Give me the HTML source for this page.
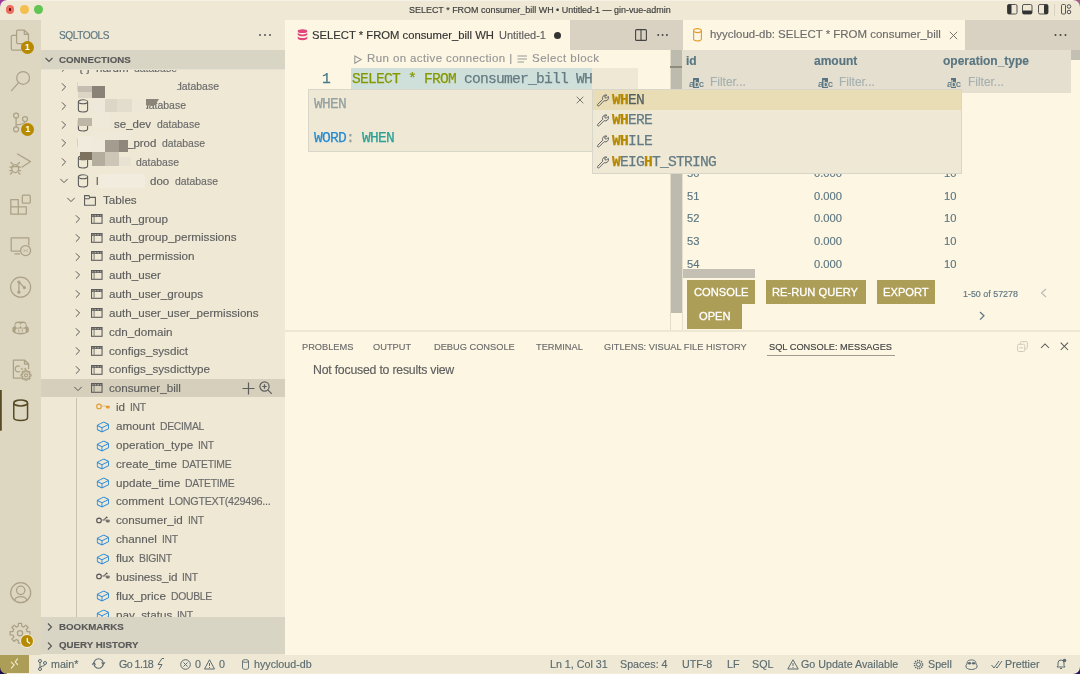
<!DOCTYPE html><html><head><meta charset="utf-8"><style>
*{margin:0;padding:0;box-sizing:border-box}
html,body{width:1080px;height:674px;overflow:hidden;background:#EEE8D5;font-family:'Liberation Sans', sans-serif;}
.a{position:absolute}
.t{position:absolute;white-space:nowrap;line-height:1;-webkit-text-stroke:0.15px currentColor;will-change:transform}
svg{position:absolute;overflow:visible}
</style></head><body>
<div class="a" style="left:0px;top:0px;width:1080px;height:20px;background:#EEE8D5;"></div>
<div class="a" style="left:0px;top:0px;width:1080px;height:1.2px;background:#F5F1E6;"></div>
<div class="a" style="left:5.549999999999999px;top:5.35px;width:8.8px;height:8.8px;border-radius:50%;background:#EE6B60;"></div>
<div class="a" style="left:19.9px;top:5.35px;width:8.8px;height:8.8px;border-radius:50%;background:#F4BF4F;"></div>
<div class="a" style="left:34.300000000000004px;top:5.35px;width:8.8px;height:8.8px;border-radius:50%;background:#61C453;"></div>
<div class="a" style="left:8.6px;top:8.4px;width:2.7px;height:2.7px;border-radius:50%;background:#5C0F0A;"></div>
<div class="t" style="left:409px;top:5.52px;height:8.96px;line-height:8.96px;font-size:8.96px;color:#3B3B3B;font-weight:400;font-family:'Liberation Sans', sans-serif;">SELECT * FROM consumer_bill WH • Untitled-1 — gin-vue-admin</div>
<svg style="left:1006.5px;top:4.1px" width="11" height="11" viewBox="0 0 11 11"><rect x="0.5" y="0.5" width="9.5" height="9.5" rx="1.5" fill="none" stroke="#555" stroke-width="1"/><rect x="0.5" y="0.5" width="4" height="9.5" rx="1" fill="#333"/></svg>
<svg style="left:1022px;top:4.1px" width="11" height="11" viewBox="0 0 11 11"><rect x="0.5" y="0.5" width="9.5" height="9.5" rx="1.5" fill="none" stroke="#555" stroke-width="1"/><rect x="0.5" y="6.5" width="9.5" height="3.5" rx="1" fill="#333"/></svg>
<svg style="left:1038px;top:4.1px" width="11" height="11" viewBox="0 0 11 11"><rect x="0.5" y="0.5" width="9.5" height="9.5" rx="1.5" fill="none" stroke="#555" stroke-width="1"/><rect x="6" y="0.5" width="4" height="9.5" rx="1" fill="#333"/></svg>
<div class="a" style="left:1053.5px;top:4px;width:1px;height:12px;background:#D8D2C0;"></div>
<svg style="left:1060.5px;top:4.1px" width="11" height="11" viewBox="0 0 11 11"><rect x="0.5" y="0.5" width="4" height="9.5" rx="1" fill="none" stroke="#555"/><circle cx="8" cy="2.5" r="1.8" fill="none" stroke="#555"/><circle cx="8" cy="8" r="1.8" fill="none" stroke="#555"/></svg>
<div class="a" style="left:0px;top:20px;width:41px;height:635px;background:#DDD6C1;"></div>
<svg style="left:0;top:0" width="41" height="674" viewBox="0 0 41 674"><path d="M21.9 43.7 H17.8 Q16.6 43.7 16.6 42.5 V31.3 Q16.6 30.1 17.8 30.1 H24.3 L28.5 34.3 V42.5 Q28.5 43.7 27.3 43.7 H21.9 M24.3 30.1 V34.3 H28.5" stroke-width="1.25" fill="none" stroke="#ACA185" stroke-linejoin="round" stroke-linecap="round"/><path d="M16.6 35.4 H12.5 Q11.3 35.4 11.3 36.6 V49 Q11.3 50.2 12.5 50.2 H20.7 Q21.9 50.2 21.9 49 V43.7" stroke-width="1.25" fill="none" stroke="#ACA185" stroke-linejoin="round" stroke-linecap="round"/><circle cx="23.1" cy="77.9" r="6.4" stroke-width="1.25" fill="none" stroke="#ACA185" stroke-linejoin="round" stroke-linecap="round"/><path d="M18.6 82.6 L11.5 90.6" stroke-width="1.25" fill="none" stroke="#ACA185" stroke-linejoin="round" stroke-linecap="round" stroke-width="1.4"/><circle cx="16.1" cy="115.6" r="2.5" stroke-width="1.25" fill="none" stroke="#ACA185" stroke-linejoin="round" stroke-linecap="round"/><circle cx="25" cy="119" r="2.5" stroke-width="1.25" fill="none" stroke="#ACA185" stroke-linejoin="round" stroke-linecap="round"/><circle cx="16.1" cy="129.3" r="2.5" stroke-width="1.25" fill="none" stroke="#ACA185" stroke-linejoin="round" stroke-linecap="round"/><path d="M16.1 118.1 V126.8 M25 121.5 Q24.5 124.6 16.1 124.8" stroke-width="1.25" fill="none" stroke="#ACA185" stroke-linejoin="round" stroke-linecap="round"/><path d="M17.6 154 L30.5 161.6 L22.2 167" stroke-width="1.25" fill="none" stroke="#ACA185" stroke-linejoin="round" stroke-linecap="round"/><ellipse cx="15.2" cy="168.6" rx="3.4" ry="4" stroke-width="1.25" fill="none" stroke="#ACA185" stroke-linejoin="round" stroke-linecap="round"/><path d="M11.8 167 H9.8 M11.8 170.5 H9.8 M18.6 167 H20.6 M18.6 170.5 H20.6 M12.5 164 L11 162.5 M17.9 164 L19.4 162.5 M12 172.5 L10.5 174 M18.4 172.5 L19.9 174 M11.8 166.5 H18.6" stroke-width="1.25" fill="none" stroke="#ACA185" stroke-linejoin="round" stroke-linecap="round" stroke-width="1.1"/><path d="M10.8 199.5 H18.3 V214 H10.8 Z M10.8 206.8 H26.3 V214 H18.3" stroke-width="1.25" fill="none" stroke="#ACA185" stroke-linejoin="round" stroke-linecap="round"/><rect x="22.3" y="195.2" width="8" height="8" rx="1.3" stroke-width="1.25" fill="none" stroke="#ACA185" stroke-linejoin="round" stroke-linecap="round"/><path d="M20 251 H11.2 V237.9 H28.8 V245" stroke-width="1.25" fill="none" stroke="#ACA185" stroke-linejoin="round" stroke-linecap="round"/><path d="M15 253.9 H19.5" stroke-width="1.25" fill="none" stroke="#ACA185" stroke-linejoin="round" stroke-linecap="round"/><circle cx="25.6" cy="250.6" r="5" stroke-width="1.25" fill="none" stroke="#ACA185" stroke-linejoin="round" stroke-linecap="round"/><path d="M23.6 249.2 L24.9 250.6 L23.6 252 M27.6 249.2 L26.3 250.6 L27.6 252" fill="none" stroke="#ACA185" stroke-width="0.9"/><circle cx="20.6" cy="287.2" r="10" stroke-width="1.25" fill="none" stroke="#ACA185" stroke-linejoin="round" stroke-linecap="round"/><path d="M18.9 282 V292.2 M18.9 282 L24.4 287.6" stroke-width="1.25" fill="none" stroke="#ACA185" stroke-linejoin="round" stroke-linecap="round"/><circle cx="18.9" cy="282" r="1.6" fill="#ACA185"/><circle cx="18.9" cy="292.2" r="1.6" fill="#ACA185"/><circle cx="24.4" cy="287.6" r="1.6" fill="#ACA185"/><path d="M14.5 326 C14.3 321.5 17 321.5 20.6 321.5 C24.2 321.5 26.9 321.5 26.7 326 L28.8 327.8 V331.5 C26.5 333.8 23.5 334.5 20.6 334.5 C17.7 334.5 14.7 333.8 12.4 331.5 V327.8 Z" fill="#ACA185"/><ellipse cx="18" cy="325.4" rx="2.6" ry="2.3" fill="#DDD6C1"/><ellipse cx="23.2" cy="325.4" rx="2.6" ry="2.3" fill="#DDD6C1"/><rect x="15.5" y="328.5" width="10.2" height="4.2" rx="1.5" fill="#DDD6C1"/><path d="M18.8 329.6 V331.4 M22.4 329.6 V331.4" stroke="#ACA185" stroke-width="1.1"/><path d="M21 378 H13.4 V360 H24.5 L28.6 364 V368.5 M24.5 360 V364 H28.6" stroke-width="1.25" fill="none" stroke="#ACA185" stroke-linejoin="round" stroke-linecap="round"/><path d="M19.5 366.2 A3 3 0 1 0 19.5 371.6" stroke-width="1.25" fill="none" stroke="#ACA185" stroke-linejoin="round" stroke-linecap="round" stroke-width="1.1"/><path d="M20.7 368.9 H23.1 M21.9 367.7 V370.1 M24 368.9 H26.4 M25.2 367.7 V370.1" fill="none" stroke="#ACA185" stroke-width="0.8"/><path d="M29.49 374.43 L30.93 374.48 L30.93 376.12 L29.49 376.17 L29.08 377.16 L30.07 378.21 L28.91 379.37 L27.86 378.38 L26.87 378.79 L26.82 380.23 L25.18 380.23 L25.13 378.79 L24.14 378.38 L23.09 379.37 L21.93 378.21 L22.92 377.16 L22.51 376.17 L21.07 376.12 L21.07 374.48 L22.51 374.43 L22.92 373.44 L21.93 372.39 L23.09 371.23 L24.14 372.22 L25.13 371.81 L25.18 370.37 L26.82 370.37 L26.87 371.81 L27.86 372.22 L28.91 371.23 L30.07 372.39 L29.08 373.44 Z" fill="#DDD6C1" stroke-width="1.25" fill="none" stroke="#ACA185" stroke-linejoin="round" stroke-linecap="round" stroke-width="1.1"/><circle cx="26" cy="375.3" r="1.5" stroke-width="1.25" fill="none" stroke="#ACA185" stroke-linejoin="round" stroke-linecap="round" stroke-width="1"/><rect x="0" y="390" width="1.8" height="40.7" fill="#584C27"/><ellipse cx="20.65" cy="403" rx="6.9" ry="2.9" fill="none" stroke="#584C27" stroke-width="1.5"/><path d="M13.75 403 V417.6 C13.75 421.6 27.55 421.6 27.55 417.6 V403" fill="none" stroke="#584C27" stroke-width="1.5"/><circle cx="20.7" cy="592.7" r="10" stroke-width="1.25" fill="none" stroke="#ACA185" stroke-linejoin="round" stroke-linecap="round"/><circle cx="20.7" cy="590.3" r="4.2" stroke-width="1.25" fill="none" stroke="#ACA185" stroke-linejoin="round" stroke-linecap="round"/><path d="M14.5 600.3 C16 595.5 25.4 595.5 26.9 600.3" stroke-width="1.25" fill="none" stroke="#ACA185" stroke-linejoin="round" stroke-linecap="round"/><path d="M27.08 631.54 L29.86 631.66 L29.86 634.94 L27.08 635.06 L26.25 637.07 L28.14 639.11 L25.81 641.44 L23.77 639.55 L21.76 640.38 L21.64 643.16 L18.36 643.16 L18.24 640.38 L16.23 639.55 L14.19 641.44 L11.86 639.11 L13.75 637.07 L12.92 635.06 L10.14 634.94 L10.14 631.66 L12.92 631.54 L13.75 629.53 L11.86 627.49 L14.19 625.16 L16.23 627.05 L18.24 626.22 L18.36 623.44 L21.64 623.44 L21.76 626.22 L23.77 627.05 L25.81 625.16 L28.14 627.49 L26.25 629.53 Z" stroke-width="1.25" fill="none" stroke="#ACA185" stroke-linejoin="round" stroke-linecap="round" stroke-width="1.2"/><circle cx="20" cy="633.3" r="2.6" stroke-width="1.25" fill="none" stroke="#ACA185" stroke-linejoin="round" stroke-linecap="round"/></svg>
<div class="a" style="left:20.799999999999997px;top:40.699999999999996px;width:13.2px;height:13.2px;border-radius:50%;background:#B58900;color:#fff;font-size:8.5px;font-weight:700;text-align:center;line-height:13.2px">1</div>
<div class="a" style="left:21.1px;top:122.7px;width:13.4px;height:13.4px;border-radius:50%;background:#B58900;color:#fff;font-size:8.5px;font-weight:700;text-align:center;line-height:13.4px">1</div>
<div class="a" style="left:20.3px;top:634px;width:14px;height:14px;border-radius:50%;background:#B58900;border:1.3px solid #F4EFDF"></div>
<svg style="left:22px;top:636px" width="10" height="10" viewBox="0 0 10 10"><path d="M5.3 2.5 V5.5 L7.6 7.2" fill="none" stroke="#fff" stroke-width="1.3" stroke-linecap="round"/></svg>
<div class="a" style="left:41px;top:20px;width:244px;height:635px;background:#EEE8D5;"></div>
<div class="t" style="left:58.7px;top:31px;height:10.1px;line-height:10.1px;font-size:10.1px;color:#5C7580;font-weight:400;font-family:'Liberation Sans', sans-serif;letter-spacing:-0.42px">SQLTOOLS</div>
<svg style="left:258px;top:31px" width="14" height="8" viewBox="0 0 14 8"><circle cx="2" cy="4" r="1" fill="#555"/><circle cx="7" cy="4" r="1" fill="#555"/><circle cx="12" cy="4" r="1" fill="#555"/></svg>
<div class="a" style="left:41px;top:69px;width:244px;height:548px;overflow:hidden">
<svg style="left:18.299999999999997px;top:-6.0px" width="10" height="10" viewBox="0 0 10 10"><path d="M2.9 1.3 L6.6 5 L2.9 8.7" fill="none" stroke="#505050" stroke-width="0.95"/></svg>
<div class="t" style="left:38px;top:-7px;height:11.67px;line-height:11.67px;font-size:11.67px;color:#5E5E5E;font-weight:400;font-family:'Liberation Sans', sans-serif;">{ }</div>
<div class="t" style="left:54.5px;top:-6px;height:11.47px;line-height:11.47px;font-size:11.47px;color:#5E5E5E;font-weight:400;font-family:'Liberation Sans', sans-serif;">harum</div>
<div class="t" style="left:92.75px;top:-5px;height:10.45px;line-height:10.45px;font-size:10.45px;color:#6A6A6A;font-weight:400;font-family:'Liberation Sans', sans-serif;">database</div>
<svg style="left:18.299999999999997px;top:12.86px" width="10" height="10" viewBox="0 0 10 10"><path d="M2.9 1.3 L6.6 5 L2.9 8.7" fill="none" stroke="#505050" stroke-width="0.95"/></svg>
<svg style="left:36px;top:10.86px" width="12" height="14" viewBox="0 0 12 14"><ellipse cx="6" cy="2.8" rx="4.6" ry="2" fill="none" stroke="#5E5E5E" stroke-width="1.1"/><path d="M1.4 2.8 V11 C1.4 13.6 10.6 13.6 10.6 11 V2.8" fill="none" stroke="#5E5E5E" stroke-width="1.1"/></svg>
<div class="t" style="left:135px;top:13px;height:10.45px;line-height:10.45px;font-size:10.45px;color:#6A6A6A;font-weight:400;font-family:'Liberation Sans', sans-serif;">database</div>
<svg style="left:18.299999999999997px;top:31.72px" width="10" height="10" viewBox="0 0 10 10"><path d="M2.9 1.3 L6.6 5 L2.9 8.7" fill="none" stroke="#505050" stroke-width="0.95"/></svg>
<svg style="left:36px;top:29.72px" width="12" height="14" viewBox="0 0 12 14"><ellipse cx="6" cy="2.8" rx="4.6" ry="2" fill="none" stroke="#5E5E5E" stroke-width="1.1"/><path d="M1.4 2.8 V11 C1.4 13.6 10.6 13.6 10.6 11 V2.8" fill="none" stroke="#5E5E5E" stroke-width="1.1"/></svg>
<div class="t" style="left:101.5px;top:32px;height:10.45px;line-height:10.45px;font-size:10.45px;color:#6A6A6A;font-weight:400;font-family:'Liberation Sans', sans-serif;">database</div>
<svg style="left:18.299999999999997px;top:50.58px" width="10" height="10" viewBox="0 0 10 10"><path d="M2.9 1.3 L6.6 5 L2.9 8.7" fill="none" stroke="#505050" stroke-width="0.95"/></svg>
<svg style="left:36px;top:48.58px" width="12" height="14" viewBox="0 0 12 14"><ellipse cx="6" cy="2.8" rx="4.6" ry="2" fill="none" stroke="#5E5E5E" stroke-width="1.1"/><path d="M1.4 2.8 V11 C1.4 13.6 10.6 13.6 10.6 11 V2.8" fill="none" stroke="#5E5E5E" stroke-width="1.1"/></svg>
<div class="t" style="left:73.31968750000001px;top:50px;height:11.5px;line-height:11.5px;font-size:11.5px;color:#5E5E5E;font-weight:400;font-family:'Liberation Sans', sans-serif;">se_dev</div>
<div class="t" style="left:115.9px;top:51px;height:10.45px;line-height:10.45px;font-size:10.45px;color:#6A6A6A;font-weight:400;font-family:'Liberation Sans', sans-serif;">database</div>
<svg style="left:18.299999999999997px;top:69.44px" width="10" height="10" viewBox="0 0 10 10"><path d="M2.9 1.3 L6.6 5 L2.9 8.7" fill="none" stroke="#505050" stroke-width="0.95"/></svg>
<svg style="left:36px;top:67.44px" width="12" height="14" viewBox="0 0 12 14"><ellipse cx="6" cy="2.8" rx="4.6" ry="2" fill="none" stroke="#5E5E5E" stroke-width="1.1"/><path d="M1.4 2.8 V11 C1.4 13.6 10.6 13.6 10.6 11 V2.8" fill="none" stroke="#5E5E5E" stroke-width="1.1"/></svg>
<div class="t" style="left:86.29054687499999px;top:69px;height:11.5px;line-height:11.5px;font-size:11.5px;color:#5E5E5E;font-weight:400;font-family:'Liberation Sans', sans-serif;">_prod</div>
<div class="t" style="left:121.19999999999999px;top:70px;height:10.45px;line-height:10.45px;font-size:10.45px;color:#6A6A6A;font-weight:400;font-family:'Liberation Sans', sans-serif;">database</div>
<svg style="left:18.299999999999997px;top:88.30000000000001px" width="10" height="10" viewBox="0 0 10 10"><path d="M2.9 1.3 L6.6 5 L2.9 8.7" fill="none" stroke="#505050" stroke-width="0.95"/></svg>
<svg style="left:36px;top:86.30000000000001px" width="12" height="14" viewBox="0 0 12 14"><ellipse cx="6" cy="2.8" rx="4.6" ry="2" fill="none" stroke="#5E5E5E" stroke-width="1.1"/><path d="M1.4 2.8 V11 C1.4 13.6 10.6 13.6 10.6 11 V2.8" fill="none" stroke="#5E5E5E" stroke-width="1.1"/></svg>
<div class="t" style="left:83.75px;top:88px;height:11.5px;line-height:11.5px;font-size:11.5px;color:#5E5E5E;font-weight:400;font-family:'Liberation Sans', sans-serif;">s</div>
<div class="t" style="left:95px;top:89px;height:10.45px;line-height:10.45px;font-size:10.45px;color:#6A6A6A;font-weight:400;font-family:'Liberation Sans', sans-serif;">database</div>
<svg style="left:18.299999999999997px;top:107.16px" width="10" height="10" viewBox="0 0 10 10"><path d="M1.3 2.9 L5 6.6 L8.7 2.9" fill="none" stroke="#505050" stroke-width="0.95"/></svg>
<svg style="left:36px;top:105.16px" width="12" height="14" viewBox="0 0 12 14"><ellipse cx="6" cy="2.8" rx="4.6" ry="2" fill="none" stroke="#5E5E5E" stroke-width="1.1"/><path d="M1.4 2.8 V11 C1.4 13.6 10.6 13.6 10.6 11 V2.8" fill="none" stroke="#5E5E5E" stroke-width="1.1"/></svg>
<div class="t" style="left:109.014765625px;top:107px;height:11.5px;line-height:11.5px;font-size:11.5px;color:#5E5E5E;font-weight:400;font-family:'Liberation Sans', sans-serif;">doo</div>
<div class="t" style="left:133.7px;top:108px;height:10.45px;line-height:10.45px;font-size:10.45px;color:#6A6A6A;font-weight:400;font-family:'Liberation Sans', sans-serif;">database</div>
<div class="t" style="left:54.5px;top:107px;height:11.5px;line-height:11.5px;font-size:11.5px;color:#5E5E5E;font-weight:400;font-family:'Liberation Sans', sans-serif;">l</div>
<div class="a" style="left:37px;top:10px;width:14.5px;height:6.8px;background:#EEE8D5;"></div>
<div class="a" style="left:37px;top:16.700000000000003px;width:14.2px;height:6.7px;background:#C5BDAF;"></div>
<div class="a" style="left:37px;top:23.400000000000006px;width:14.2px;height:6px;background:#DCD5C6;"></div>
<div class="a" style="left:51.2px;top:16.700000000000003px;width:12.6px;height:12.6px;background:#8B8277;"></div>
<div class="a" style="left:51.2px;top:30px;width:12.8px;height:13.2px;background:#EDE8DA;"></div>
<div class="a" style="left:64px;top:30px;width:12px;height:13.2px;background:#DCD6C7;"></div>
<div class="a" style="left:76px;top:30px;width:14.5px;height:13.2px;background:#E3DDCE;"></div>
<div class="a" style="left:90.5px;top:30px;width:14px;height:13.2px;background:#ECE7D6;"></div>
<div class="a" style="left:37px;top:48.599999999999994px;width:14.2px;height:8.1px;background:#BDB5A6;"></div>
<div class="a" style="left:51px;top:43.5px;width:18px;height:14px;background:#EEE9D8;"></div>
<div class="a" style="left:36.5px;top:67px;width:14.7px;height:16.4px;background:#F0EBDC;"></div>
<div class="a" style="left:51px;top:71px;width:13px;height:12.4px;background:#EFEADC;"></div>
<div class="a" style="left:64px;top:71px;width:14px;height:12.4px;background:#A39C8F;"></div>
<div class="a" style="left:78px;top:71px;width:8.8px;height:12.4px;background:#8F877B;"></div>
<div class="a" style="left:39.400000000000006px;top:83.4px;width:11.8px;height:8.1px;background:#7C725F;"></div>
<div class="a" style="left:51.2px;top:83.4px;width:12.8px;height:13.3px;background:#B4AC9D;"></div>
<div class="a" style="left:64px;top:83.4px;width:14px;height:13.3px;background:#CDC6B6;"></div>
<div class="a" style="left:78px;top:88px;width:11.7px;height:8.7px;background:#E8E2D3;"></div>
<div class="a" style="left:58px;top:105px;width:46px;height:14px;background:#F1ECDE;"></div>
<div class="a" style="left:104.5px;top:30px;width:13.5px;height:6.5px;background:#8B8478;clip-path:polygon(0 0,100% 0,70% 100%,0 100%)"></div>
<div class="a" style="left:51px;top:61.5px;width:40px;height:9.5px;background:#EEE9D8;"></div>
<div class="a" style="left:134.5px;top:11px;width:2.8px;height:9px;background:#EEE8D5;"></div>
<svg style="left:25px;top:126.01999999999998px" width="10" height="10" viewBox="0 0 10 10"><path d="M1.3 2.9 L5 6.6 L8.7 2.9" fill="none" stroke="#505050" stroke-width="0.95"/></svg>
<svg style="left:43.099999999999994px;top:126.01999999999998px" width="13" height="11" viewBox="0 0 13 11"><path d="M0.55 0.6 H5 L5.8 2.4 H11.4 V10.3 H0.55 Z" fill="none" stroke="#5E5E5E" stroke-width="1.1"/><path d="M0.55 3.8 H5 L5.8 2.4" fill="none" stroke="#5E5E5E" stroke-width="1.1"/></svg>
<div class="t" style="left:61.7px;top:125px;height:11.67px;line-height:11.67px;font-size:11.67px;color:#5E5E5E;font-weight:400;font-family:'Liberation Sans', sans-serif;">Tables</div>
<svg style="left:31.799999999999997px;top:144.88px" width="10" height="10" viewBox="0 0 10 10"><path d="M2.9 1.3 L6.6 5 L2.9 8.7" fill="none" stroke="#505050" stroke-width="0.95"/></svg>
<svg style="left:50.099999999999994px;top:144.68px" width="12" height="10" viewBox="0 0 12 10"><rect x="0.55" y="0.55" width="10.5" height="8.75" fill="none" stroke="#5E5E5E" stroke-width="1.1"/><rect x="0.55" y="0.55" width="10.5" height="2.4" fill="#5E5E5E"/><path d="M1.3 1.75 H2.4 M3.6 1.75 H5.2 M6.4 1.75 H8 M9.2 1.75 H10.3" stroke="#D9D3C3" stroke-width="0.8"/><path d="M3.1 2.9 V9.3" stroke="#8A867E" stroke-width="1.1"/></svg>
<div class="t" style="left:67.9px;top:144px;height:11.67px;line-height:11.67px;font-size:11.67px;color:#5E5E5E;font-weight:400;font-family:'Liberation Sans', sans-serif;">auth_group</div>
<svg style="left:31.799999999999997px;top:163.74px" width="10" height="10" viewBox="0 0 10 10"><path d="M2.9 1.3 L6.6 5 L2.9 8.7" fill="none" stroke="#505050" stroke-width="0.95"/></svg>
<svg style="left:50.099999999999994px;top:163.54000000000002px" width="12" height="10" viewBox="0 0 12 10"><rect x="0.55" y="0.55" width="10.5" height="8.75" fill="none" stroke="#5E5E5E" stroke-width="1.1"/><rect x="0.55" y="0.55" width="10.5" height="2.4" fill="#5E5E5E"/><path d="M1.3 1.75 H2.4 M3.6 1.75 H5.2 M6.4 1.75 H8 M9.2 1.75 H10.3" stroke="#D9D3C3" stroke-width="0.8"/><path d="M3.1 2.9 V9.3" stroke="#8A867E" stroke-width="1.1"/></svg>
<div class="t" style="left:67.9px;top:162px;height:11.67px;line-height:11.67px;font-size:11.67px;color:#5E5E5E;font-weight:400;font-family:'Liberation Sans', sans-serif;">auth_group_permissions</div>
<svg style="left:31.799999999999997px;top:182.60000000000002px" width="10" height="10" viewBox="0 0 10 10"><path d="M2.9 1.3 L6.6 5 L2.9 8.7" fill="none" stroke="#505050" stroke-width="0.95"/></svg>
<svg style="left:50.099999999999994px;top:182.40000000000003px" width="12" height="10" viewBox="0 0 12 10"><rect x="0.55" y="0.55" width="10.5" height="8.75" fill="none" stroke="#5E5E5E" stroke-width="1.1"/><rect x="0.55" y="0.55" width="10.5" height="2.4" fill="#5E5E5E"/><path d="M1.3 1.75 H2.4 M3.6 1.75 H5.2 M6.4 1.75 H8 M9.2 1.75 H10.3" stroke="#D9D3C3" stroke-width="0.8"/><path d="M3.1 2.9 V9.3" stroke="#8A867E" stroke-width="1.1"/></svg>
<div class="t" style="left:67.9px;top:181px;height:11.67px;line-height:11.67px;font-size:11.67px;color:#5E5E5E;font-weight:400;font-family:'Liberation Sans', sans-serif;">auth_permission</div>
<svg style="left:31.799999999999997px;top:201.45999999999998px" width="10" height="10" viewBox="0 0 10 10"><path d="M2.9 1.3 L6.6 5 L2.9 8.7" fill="none" stroke="#505050" stroke-width="0.95"/></svg>
<svg style="left:50.099999999999994px;top:201.26px" width="12" height="10" viewBox="0 0 12 10"><rect x="0.55" y="0.55" width="10.5" height="8.75" fill="none" stroke="#5E5E5E" stroke-width="1.1"/><rect x="0.55" y="0.55" width="10.5" height="2.4" fill="#5E5E5E"/><path d="M1.3 1.75 H2.4 M3.6 1.75 H5.2 M6.4 1.75 H8 M9.2 1.75 H10.3" stroke="#D9D3C3" stroke-width="0.8"/><path d="M3.1 2.9 V9.3" stroke="#8A867E" stroke-width="1.1"/></svg>
<div class="t" style="left:67.9px;top:200px;height:11.67px;line-height:11.67px;font-size:11.67px;color:#5E5E5E;font-weight:400;font-family:'Liberation Sans', sans-serif;">auth_user</div>
<svg style="left:31.799999999999997px;top:220.32px" width="10" height="10" viewBox="0 0 10 10"><path d="M2.9 1.3 L6.6 5 L2.9 8.7" fill="none" stroke="#505050" stroke-width="0.95"/></svg>
<svg style="left:50.099999999999994px;top:220.12px" width="12" height="10" viewBox="0 0 12 10"><rect x="0.55" y="0.55" width="10.5" height="8.75" fill="none" stroke="#5E5E5E" stroke-width="1.1"/><rect x="0.55" y="0.55" width="10.5" height="2.4" fill="#5E5E5E"/><path d="M1.3 1.75 H2.4 M3.6 1.75 H5.2 M6.4 1.75 H8 M9.2 1.75 H10.3" stroke="#D9D3C3" stroke-width="0.8"/><path d="M3.1 2.9 V9.3" stroke="#8A867E" stroke-width="1.1"/></svg>
<div class="t" style="left:67.9px;top:219px;height:11.67px;line-height:11.67px;font-size:11.67px;color:#5E5E5E;font-weight:400;font-family:'Liberation Sans', sans-serif;">auth_user_groups</div>
<svg style="left:31.799999999999997px;top:239.18px" width="10" height="10" viewBox="0 0 10 10"><path d="M2.9 1.3 L6.6 5 L2.9 8.7" fill="none" stroke="#505050" stroke-width="0.95"/></svg>
<svg style="left:50.099999999999994px;top:238.98000000000002px" width="12" height="10" viewBox="0 0 12 10"><rect x="0.55" y="0.55" width="10.5" height="8.75" fill="none" stroke="#5E5E5E" stroke-width="1.1"/><rect x="0.55" y="0.55" width="10.5" height="2.4" fill="#5E5E5E"/><path d="M1.3 1.75 H2.4 M3.6 1.75 H5.2 M6.4 1.75 H8 M9.2 1.75 H10.3" stroke="#D9D3C3" stroke-width="0.8"/><path d="M3.1 2.9 V9.3" stroke="#8A867E" stroke-width="1.1"/></svg>
<div class="t" style="left:67.9px;top:238px;height:11.67px;line-height:11.67px;font-size:11.67px;color:#5E5E5E;font-weight:400;font-family:'Liberation Sans', sans-serif;">auth_user_user_permissions</div>
<svg style="left:31.799999999999997px;top:258.03999999999996px" width="10" height="10" viewBox="0 0 10 10"><path d="M2.9 1.3 L6.6 5 L2.9 8.7" fill="none" stroke="#505050" stroke-width="0.95"/></svg>
<svg style="left:50.099999999999994px;top:257.84px" width="12" height="10" viewBox="0 0 12 10"><rect x="0.55" y="0.55" width="10.5" height="8.75" fill="none" stroke="#5E5E5E" stroke-width="1.1"/><rect x="0.55" y="0.55" width="10.5" height="2.4" fill="#5E5E5E"/><path d="M1.3 1.75 H2.4 M3.6 1.75 H5.2 M6.4 1.75 H8 M9.2 1.75 H10.3" stroke="#D9D3C3" stroke-width="0.8"/><path d="M3.1 2.9 V9.3" stroke="#8A867E" stroke-width="1.1"/></svg>
<div class="t" style="left:67.9px;top:257px;height:11.67px;line-height:11.67px;font-size:11.67px;color:#5E5E5E;font-weight:400;font-family:'Liberation Sans', sans-serif;">cdn_domain</div>
<svg style="left:31.799999999999997px;top:276.9px" width="10" height="10" viewBox="0 0 10 10"><path d="M2.9 1.3 L6.6 5 L2.9 8.7" fill="none" stroke="#505050" stroke-width="0.95"/></svg>
<svg style="left:50.099999999999994px;top:276.7px" width="12" height="10" viewBox="0 0 12 10"><rect x="0.55" y="0.55" width="10.5" height="8.75" fill="none" stroke="#5E5E5E" stroke-width="1.1"/><rect x="0.55" y="0.55" width="10.5" height="2.4" fill="#5E5E5E"/><path d="M1.3 1.75 H2.4 M3.6 1.75 H5.2 M6.4 1.75 H8 M9.2 1.75 H10.3" stroke="#D9D3C3" stroke-width="0.8"/><path d="M3.1 2.9 V9.3" stroke="#8A867E" stroke-width="1.1"/></svg>
<div class="t" style="left:67.9px;top:276px;height:11.67px;line-height:11.67px;font-size:11.67px;color:#5E5E5E;font-weight:400;font-family:'Liberation Sans', sans-serif;">configs_sysdict</div>
<svg style="left:31.799999999999997px;top:295.76px" width="10" height="10" viewBox="0 0 10 10"><path d="M2.9 1.3 L6.6 5 L2.9 8.7" fill="none" stroke="#505050" stroke-width="0.95"/></svg>
<svg style="left:50.099999999999994px;top:295.56px" width="12" height="10" viewBox="0 0 12 10"><rect x="0.55" y="0.55" width="10.5" height="8.75" fill="none" stroke="#5E5E5E" stroke-width="1.1"/><rect x="0.55" y="0.55" width="10.5" height="2.4" fill="#5E5E5E"/><path d="M1.3 1.75 H2.4 M3.6 1.75 H5.2 M6.4 1.75 H8 M9.2 1.75 H10.3" stroke="#D9D3C3" stroke-width="0.8"/><path d="M3.1 2.9 V9.3" stroke="#8A867E" stroke-width="1.1"/></svg>
<div class="t" style="left:67.9px;top:294px;height:11.67px;line-height:11.67px;font-size:11.67px;color:#5E5E5E;font-weight:400;font-family:'Liberation Sans', sans-serif;">configs_sysdicttype</div>
<div class="a" style="left:0px;top:310.02px;width:243.5px;height:18.3px;background:#D6CFBB;"></div>
<svg style="left:201px;top:313.12px" width="13" height="13" viewBox="0 0 13 13"><path d="M6.5 0.5 V12.5 M0.5 6.5 H12.5" stroke="#5E5E5E" stroke-width="1.2"/></svg>
<svg style="left:217.60000000000002px;top:312.32px" width="14" height="14" viewBox="0 0 14 14"><circle cx="5.5" cy="5.5" r="4.6" fill="none" stroke="#5E5E5E" stroke-width="1.2"/><path d="M8.8 8.8 L12.8 12.8 M3.3 5.5 H7.7 M5.5 3.3 V7.7" stroke="#5E5E5E" stroke-width="1.2"/></svg>
<svg style="left:31.799999999999997px;top:314.62px" width="10" height="10" viewBox="0 0 10 10"><path d="M1.3 2.9 L5 6.6 L8.7 2.9" fill="none" stroke="#505050" stroke-width="0.95"/></svg>
<svg style="left:50.099999999999994px;top:314.42px" width="12" height="10" viewBox="0 0 12 10"><rect x="0.55" y="0.55" width="10.5" height="8.75" fill="none" stroke="#5E5E5E" stroke-width="1.1"/><rect x="0.55" y="0.55" width="10.5" height="2.4" fill="#5E5E5E"/><path d="M1.3 1.75 H2.4 M3.6 1.75 H5.2 M6.4 1.75 H8 M9.2 1.75 H10.3" stroke="#D9D3C3" stroke-width="0.8"/><path d="M3.1 2.9 V9.3" stroke="#8A867E" stroke-width="1.1"/></svg>
<div class="t" style="left:67.9px;top:313px;height:11.67px;line-height:11.67px;font-size:11.67px;color:#5E5E5E;font-weight:400;font-family:'Liberation Sans', sans-serif;">consumer_bill</div>
<div class="a" style="left:34.5px;top:329.05px;width:1px;height:300px;background:#C8C1AD;"></div>
<svg style="left:55.3px;top:333.48px" width="14" height="10" viewBox="0 0 14 10"><circle cx="3" cy="4.4" r="2.3" fill="none" stroke="#E39B36" stroke-width="1.1"/><path d="M5.4 4.1 H13.4" stroke="#E39B36" stroke-width="0.9" opacity="0.65"/><path d="M9.8 4.1 H13.8 V5 Q13.8 6.6 12.2 6.6 H11.4 Q9.8 6.6 9.8 5 Z" fill="#E39B36"/></svg>
<div class="t" style="left:74.8px;top:332px;height:11.67px;line-height:11.67px;font-size:11.67px;color:#5E5E5E;font-weight:400;font-family:'Liberation Sans', sans-serif;">id</div>
<div class="t" style="left:88.88254218750001px;top:334px;height:10.4px;line-height:10.4px;font-size:10.4px;color:#6A6A6A;font-weight:400;font-family:'Liberation Sans', sans-serif;letter-spacing:-0.3px">INT</div>
<svg style="left:55.400000000000006px;top:350.73999999999995px" width="14" height="13" viewBox="0 0 14 13"><g transform="scale(0.86)"><path d="M14.45 4.5l-5-2.5h-.9l-7 3.5-.55.89v4.5l.55.9 5 2.5h.9l7-3.5.55-.9v-4.5l-.55-.89zm-8 8.64l-4.5-2.25V7.17l4.5 2v3.97zm.5-4.8L2.29 6.23l6.66-3.34 4.67 2.34-6.67 3.11zm7 1.55l-6.5 3.25V9.21l6.5-3v3.68z" fill="#2486D6"/></g></svg>
<div class="t" style="left:74.8px;top:351px;height:11.67px;line-height:11.67px;font-size:11.67px;color:#5E5E5E;font-weight:400;font-family:'Liberation Sans', sans-serif;">amount</div>
<div class="t" style="left:118.7212734375px;top:353px;height:10.4px;line-height:10.4px;font-size:10.4px;color:#6A6A6A;font-weight:400;font-family:'Liberation Sans', sans-serif;letter-spacing:-0.3px">DECIMAL</div>
<svg style="left:55.400000000000006px;top:369.59999999999997px" width="14" height="13" viewBox="0 0 14 13"><g transform="scale(0.86)"><path d="M14.45 4.5l-5-2.5h-.9l-7 3.5-.55.89v4.5l.55.9 5 2.5h.9l7-3.5.55-.9v-4.5l-.55-.89zm-8 8.64l-4.5-2.25V7.17l4.5 2v3.97zm.5-4.8L2.29 6.23l6.66-3.34 4.67 2.34-6.67 3.11zm7 1.55l-6.5 3.25V9.21l6.5-3v3.68z" fill="#2486D6"/></g></svg>
<div class="t" style="left:74.8px;top:370px;height:11.67px;line-height:11.67px;font-size:11.67px;color:#5E5E5E;font-weight:400;font-family:'Liberation Sans', sans-serif;">operation_type</div>
<div class="t" style="left:157.00434374999998px;top:372px;height:10.4px;line-height:10.4px;font-size:10.4px;color:#6A6A6A;font-weight:400;font-family:'Liberation Sans', sans-serif;letter-spacing:-0.3px">INT</div>
<svg style="left:55.400000000000006px;top:388.46px" width="14" height="13" viewBox="0 0 14 13"><g transform="scale(0.86)"><path d="M14.45 4.5l-5-2.5h-.9l-7 3.5-.55.89v4.5l.55.9 5 2.5h.9l7-3.5.55-.9v-4.5l-.55-.89zm-8 8.64l-4.5-2.25V7.17l4.5 2v3.97zm.5-4.8L2.29 6.23l6.66-3.34 4.67 2.34-6.67 3.11zm7 1.55l-6.5 3.25V9.21l6.5-3v3.68z" fill="#2486D6"/></g></svg>
<div class="t" style="left:74.8px;top:389px;height:11.67px;line-height:11.67px;font-size:11.67px;color:#5E5E5E;font-weight:400;font-family:'Liberation Sans', sans-serif;">create_time</div>
<div class="t" style="left:140.7666328125px;top:391px;height:10.4px;line-height:10.4px;font-size:10.4px;color:#6A6A6A;font-weight:400;font-family:'Liberation Sans', sans-serif;letter-spacing:-0.3px">DATETIME</div>
<svg style="left:55.400000000000006px;top:407.31999999999994px" width="14" height="13" viewBox="0 0 14 13"><g transform="scale(0.86)"><path d="M14.45 4.5l-5-2.5h-.9l-7 3.5-.55.89v4.5l.55.9 5 2.5h.9l7-3.5.55-.9v-4.5l-.55-.89zm-8 8.64l-4.5-2.25V7.17l4.5 2v3.97zm.5-4.8L2.29 6.23l6.66-3.34 4.67 2.34-6.67 3.11zm7 1.55l-6.5 3.25V9.21l6.5-3v3.68z" fill="#2486D6"/></g></svg>
<div class="t" style="left:74.8px;top:408px;height:11.67px;line-height:11.67px;font-size:11.67px;color:#5E5E5E;font-weight:400;font-family:'Liberation Sans', sans-serif;">update_time</div>
<div class="t" style="left:144.025115625px;top:410px;height:10.4px;line-height:10.4px;font-size:10.4px;color:#6A6A6A;font-weight:400;font-family:'Liberation Sans', sans-serif;letter-spacing:-0.3px">DATETIME</div>
<svg style="left:55.400000000000006px;top:426.17999999999995px" width="14" height="13" viewBox="0 0 14 13"><g transform="scale(0.86)"><path d="M14.45 4.5l-5-2.5h-.9l-7 3.5-.55.89v4.5l.55.9 5 2.5h.9l7-3.5.55-.9v-4.5l-.55-.89zm-8 8.64l-4.5-2.25V7.17l4.5 2v3.97zm.5-4.8L2.29 6.23l6.66-3.34 4.67 2.34-6.67 3.11zm7 1.55l-6.5 3.25V9.21l6.5-3v3.68z" fill="#2486D6"/></g></svg>
<div class="t" style="left:74.8px;top:426px;height:11.67px;line-height:11.67px;font-size:11.67px;color:#5E5E5E;font-weight:400;font-family:'Liberation Sans', sans-serif;">comment</div>
<div class="t" style="left:127.78740468749999px;top:427px;height:10.8px;line-height:10.8px;font-size:10.8px;color:#6A6A6A;font-weight:400;font-family:'Liberation Sans', sans-serif;letter-spacing:-0.3px">LONGTEXT(429496...</div>
<svg style="left:55.3px;top:446.64px" width="14" height="10" viewBox="0 0 14 10"><circle cx="3" cy="4.4" r="2.3" fill="none" stroke="#555555" stroke-width="1.1"/><path d="M5.4 4 H13.4" stroke="#555555" stroke-width="0.9" opacity="0.7"/><path d="M7.4 4 L10.4 1.6" stroke="#555555" stroke-width="1"/><circle cx="10.6" cy="1.4" r="0.95" fill="#555555"/><path d="M9.8 4.2 H13.8 V5 Q13.8 6.4 12.4 6.4 H11.2 Q9.8 6.4 9.8 5 Z" fill="#555555" opacity="0.85"/></svg>
<div class="t" style="left:74.8px;top:445px;height:11.67px;line-height:11.67px;font-size:11.67px;color:#5E5E5E;font-weight:400;font-family:'Liberation Sans', sans-serif;">consumer_id</div>
<div class="t" style="left:146.60710312499998px;top:447px;height:10.4px;line-height:10.4px;font-size:10.4px;color:#6A6A6A;font-weight:400;font-family:'Liberation Sans', sans-serif;letter-spacing:-0.3px">INT</div>
<svg style="left:55.400000000000006px;top:463.9px" width="14" height="13" viewBox="0 0 14 13"><g transform="scale(0.86)"><path d="M14.45 4.5l-5-2.5h-.9l-7 3.5-.55.89v4.5l.55.9 5 2.5h.9l7-3.5.55-.9v-4.5l-.55-.89zm-8 8.64l-4.5-2.25V7.17l4.5 2v3.97zm.5-4.8L2.29 6.23l6.66-3.34 4.67 2.34-6.67 3.11zm7 1.55l-6.5 3.25V9.21l6.5-3v3.68z" fill="#2486D6"/></g></svg>
<div class="t" style="left:74.8px;top:464px;height:11.67px;line-height:11.67px;font-size:11.67px;color:#5E5E5E;font-weight:400;font-family:'Liberation Sans', sans-serif;">channel</div>
<div class="t" style="left:120.6759984375px;top:466px;height:10.4px;line-height:10.4px;font-size:10.4px;color:#6A6A6A;font-weight:400;font-family:'Liberation Sans', sans-serif;letter-spacing:-0.3px">INT</div>
<svg style="left:55.400000000000006px;top:482.76px" width="14" height="13" viewBox="0 0 14 13"><g transform="scale(0.86)"><path d="M14.45 4.5l-5-2.5h-.9l-7 3.5-.55.89v4.5l.55.9 5 2.5h.9l7-3.5.55-.9v-4.5l-.55-.89zm-8 8.64l-4.5-2.25V7.17l4.5 2v3.97zm.5-4.8L2.29 6.23l6.66-3.34 4.67 2.34-6.67 3.11zm7 1.55l-6.5 3.25V9.21l6.5-3v3.68z" fill="#2486D6"/></g></svg>
<div class="t" style="left:74.8px;top:483px;height:11.67px;line-height:11.67px;font-size:11.67px;color:#5E5E5E;font-weight:400;font-family:'Liberation Sans', sans-serif;">flux</div>
<div class="t" style="left:97.95961406250001px;top:485px;height:10.4px;line-height:10.4px;font-size:10.4px;color:#6A6A6A;font-weight:400;font-family:'Liberation Sans', sans-serif;letter-spacing:-0.3px">BIGINT</div>
<svg style="left:55.3px;top:503.22px" width="14" height="10" viewBox="0 0 14 10"><circle cx="3" cy="4.4" r="2.3" fill="none" stroke="#555555" stroke-width="1.1"/><path d="M5.4 4 H13.4" stroke="#555555" stroke-width="0.9" opacity="0.7"/><path d="M7.4 4 L10.4 1.6" stroke="#555555" stroke-width="1"/><circle cx="10.6" cy="1.4" r="0.95" fill="#555555"/><path d="M9.8 4.2 H13.8 V5 Q13.8 6.4 12.4 6.4 H11.2 Q9.8 6.4 9.8 5 Z" fill="#555555" opacity="0.85"/></svg>
<div class="t" style="left:74.8px;top:502px;height:11.67px;line-height:11.67px;font-size:11.67px;color:#5E5E5E;font-weight:400;font-family:'Liberation Sans', sans-serif;">business_id</div>
<div class="t" style="left:141.42854062499998px;top:504px;height:10.4px;line-height:10.4px;font-size:10.4px;color:#6A6A6A;font-weight:400;font-family:'Liberation Sans', sans-serif;letter-spacing:-0.3px">INT</div>
<svg style="left:55.400000000000006px;top:520.4799999999999px" width="14" height="13" viewBox="0 0 14 13"><g transform="scale(0.86)"><path d="M14.45 4.5l-5-2.5h-.9l-7 3.5-.55.89v4.5l.55.9 5 2.5h.9l7-3.5.55-.9v-4.5l-.55-.89zm-8 8.64l-4.5-2.25V7.17l4.5 2v3.97zm.5-4.8L2.29 6.23l6.66-3.34 4.67 2.34-6.67 3.11zm7 1.55l-6.5 3.25V9.21l6.5-3v3.68z" fill="#2486D6"/></g></svg>
<div class="t" style="left:74.8px;top:521px;height:11.67px;line-height:11.67px;font-size:11.67px;color:#5E5E5E;font-weight:400;font-family:'Liberation Sans', sans-serif;">flux_price</div>
<div class="t" style="left:129.74212968749998px;top:523px;height:10.4px;line-height:10.4px;font-size:10.4px;color:#6A6A6A;font-weight:400;font-family:'Liberation Sans', sans-serif;letter-spacing:-0.3px">DOUBLE</div>
<svg style="left:55.400000000000006px;top:539.3399999999999px" width="14" height="13" viewBox="0 0 14 13"><g transform="scale(0.86)"><path d="M14.45 4.5l-5-2.5h-.9l-7 3.5-.55.89v4.5l.55.9 5 2.5h.9l7-3.5.55-.9v-4.5l-.55-.89zm-8 8.64l-4.5-2.25V7.17l4.5 2v3.97zm.5-4.8L2.29 6.23l6.66-3.34 4.67 2.34-6.67 3.11zm7 1.55l-6.5 3.25V9.21l6.5-3v3.68z" fill="#2486D6"/></g></svg>
<div class="t" style="left:74.8px;top:540px;height:11.67px;line-height:11.67px;font-size:11.67px;color:#5E5E5E;font-weight:400;font-family:'Liberation Sans', sans-serif;">pay_status</div>
<div class="t" style="left:136.2372140625px;top:542px;height:10.4px;line-height:10.4px;font-size:10.4px;color:#6A6A6A;font-weight:400;font-family:'Liberation Sans', sans-serif;letter-spacing:-0.3px">INT</div>
</div>
<div class="a" style="left:41px;top:50.1px;width:243.5px;height:18.8px;background:#D9D5C4;"></div>
<div class="a" style="left:41px;top:68.9px;width:243.5px;height:1.6px;background:#E6E2D3;"></div>
<svg style="left:44px;top:54.5px" width="10" height="10" viewBox="0 0 10 10"><path d="M1.5 3 L5 6.5 L8.5 3" fill="none" stroke="#555" stroke-width="1.1"/></svg>
<div class="t" style="left:58.5px;top:54.64px;height:9.72px;line-height:9.72px;font-size:9.72px;color:#585858;font-weight:700;font-family:'Liberation Sans', sans-serif;">CONNECTIONS</div>
<div class="a" style="left:41px;top:617px;width:243.5px;height:37.4px;background:#D9D5C4;"></div>
<svg style="left:45px;top:621.5px" width="10" height="10" viewBox="0 0 10 10"><path d="M3 1.5 L6.5 5 L3 8.5" fill="none" stroke="#555" stroke-width="1.1"/></svg>
<div class="t" style="left:58.5px;top:621.64px;height:9.72px;line-height:9.72px;font-size:9.72px;color:#585858;font-weight:700;font-family:'Liberation Sans', sans-serif;">BOOKMARKS</div>
<svg style="left:45px;top:640.5px" width="10" height="10" viewBox="0 0 10 10"><path d="M3 1.5 L6.5 5 L3 8.5" fill="none" stroke="#555" stroke-width="1.1"/></svg>
<div class="t" style="left:58.5px;top:640.4399999999999px;height:9.72px;line-height:9.72px;font-size:9.72px;color:#585858;font-weight:700;font-family:'Liberation Sans', sans-serif;">QUERY HISTORY</div>
<div class="a" style="left:285px;top:20px;width:795px;height:310px;background:#FDF6E3;"></div>
<div class="a" style="left:285px;top:20px;width:398px;height:30px;background:#D9D2C2;"></div>
<div class="a" style="left:285px;top:20px;width:285.2px;height:30px;background:#FDF6E3;"></div>
<svg style="left:297px;top:29px" width="11" height="12" viewBox="0 0 11 12"><ellipse cx="5.5" cy="2.2" rx="4.8" ry="1.9" fill="#E0457B"/><path d="M0.7 3.6 C0.7 6 10.3 6 10.3 3.6 V5.4 C10.3 7.8 0.7 7.8 0.7 5.4Z" fill="#E0457B"/><path d="M0.7 7.2 C0.7 9.6 10.3 9.6 10.3 7.2 V9.2 C10.3 11.8 0.7 11.8 0.7 9.2Z" fill="#E0457B"/></svg>
<div class="t" style="left:312px;top:30px;height:11.27px;line-height:11.27px;font-size:11.27px;color:#333333;font-weight:400;font-family:'Liberation Sans', sans-serif;">SELECT * FROM consumer_bill WH</div>
<div class="t" style="left:498.5px;top:30px;height:10.98px;line-height:10.98px;font-size:10.98px;color:#5E5E5E;font-weight:400;font-family:'Liberation Sans', sans-serif;">Untitled-1</div>
<div class="a" style="left:554px;top:31.5px;width:7px;height:7px;border-radius:50%;background:#333"></div>
<svg style="left:635px;top:29px" width="12" height="12" viewBox="0 0 12 12"><rect x="0.6" y="0.6" width="10.8" height="10.8" rx="1" fill="none" stroke="#444" stroke-width="1.1"/><path d="M6 0.6 V11.4" stroke="#444" stroke-width="1.1"/></svg>
<svg style="left:656px;top:33px" width="14" height="4" viewBox="0 0 14 4"><circle cx="2.2" cy="2" r="0.95" fill="#444"/><circle cx="6.6" cy="2" r="0.95" fill="#444"/><circle cx="10.9" cy="2" r="0.95" fill="#444"/></svg>
<svg style="left:354.3px;top:54.7px" width="8" height="10" viewBox="0 0 8 10"><path d="M0.8 1 L7.2 4.6 L0.8 8.2 Z" fill="none" stroke="#999" stroke-width="1.1"/></svg>
<div class="t" style="left:366.9px;top:53px;height:11.5px;line-height:11.5px;font-size:11.5px;color:#959595;font-weight:400;font-family:'Liberation Sans', sans-serif;letter-spacing:0.396px">Run on active connection |</div>
<svg style="left:516.6px;top:55px" width="11" height="9" viewBox="0 0 11 9"><path d="M0.5 1 H10 M0.5 4 H10 M0.5 7 H7" stroke="#999" stroke-width="1.1"/></svg>
<div class="t" style="left:531.5px;top:53px;height:11.5px;line-height:11.5px;font-size:11.5px;color:#959595;font-weight:400;font-family:'Liberation Sans', sans-serif;letter-spacing:0.458px">Select block</div>
<div class="a" style="left:592px;top:68px;width:46px;height:20.5px;background:#EEE8D5;"></div>
<div class="a" style="left:351px;top:68px;width:241px;height:20.5px;background:#CFDFD9;"></div>
<div class="t" style="left:321.5px;top:71.7px;height:14.6px;line-height:14.6px;font-size:14.6px;color:#457B8A;font-weight:400;font-family:'Liberation Mono', monospace;letter-spacing:-0.76px;-webkit-text-stroke:0.25px">1</div>
<div class="t" style="left:351.5px;top:70.5px;font-family:'Liberation Mono', monospace;font-size:14.6px;line-height:17px;letter-spacing:-0.76px;-webkit-text-stroke:0.25px;color:#657B83"><span style="color:#859900">SELECT * FROM</span> consumer_bill WH</div>
<div class="a" style="left:670px;top:50px;width:12px;height:263px;background:#BDBBAE;"></div>
<div class="a" style="left:670px;top:50px;width:1px;height:280px;background:#E2DCCB;"></div>
<div class="a" style="left:670px;top:66px;width:13px;height:1.5px;background:#8E8A7C;"></div>
<div class="a" style="left:682px;top:50px;width:1px;height:280px;background:#E5DFCE;"></div>
<div class="a" style="left:683px;top:20px;width:397px;height:30px;background:#D9D2C2;"></div>
<div class="a" style="left:683px;top:20px;width:282px;height:30px;background:#FDF6E3;"></div>
<svg style="left:693px;top:28px" width="10" height="14" viewBox="0 0 10 14"><ellipse cx="4.5" cy="2.6" rx="3.9" ry="2" fill="none" stroke="#E39B2B" stroke-width="1.1"/><path d="M0.6 2.6 V11 C0.6 13.5 8.4 13.5 8.4 11 V2.6" fill="none" stroke="#E39B2B" stroke-width="1.1"/></svg>
<div class="t" style="left:710px;top:29px;height:11.46px;line-height:11.46px;font-size:11.46px;color:#6A6A6A;font-weight:400;font-family:'Liberation Sans', sans-serif;">hyycloud-db: SELECT * FROM consumer_bill</div>
<svg style="left:948.5px;top:30.5px" width="9" height="9" viewBox="0 0 9 9"><path d="M0.8 0.8 L8.2 8.2 M8.2 0.8 L0.8 8.2" stroke="#6E6E6E" stroke-width="0.95"/></svg>
<svg style="left:1054px;top:33px" width="14" height="4" viewBox="0 0 14 4"><circle cx="1.5" cy="2" r="1" fill="#444"/><circle cx="6.5" cy="2" r="1" fill="#444"/><circle cx="11.5" cy="2" r="1" fill="#444"/></svg>
<div class="a" style="left:683px;top:50px;width:388px;height:43px;background:#E5DFD0;"></div>
<div class="a" style="left:1071px;top:50px;width:9px;height:10px;background:#C3C0B3;"></div>
<div class="t" style="left:686px;top:54.5px;height:12px;line-height:12px;font-size:12px;color:#587581;font-weight:700;font-family:'Liberation Sans', sans-serif;">id</div>
<div class="t" style="left:814px;top:54.5px;height:12px;line-height:12px;font-size:12px;color:#587581;font-weight:700;font-family:'Liberation Sans', sans-serif;">amount</div>
<div class="t" style="left:943px;top:54.5px;height:12px;line-height:12px;font-size:12px;color:#587581;font-weight:700;font-family:'Liberation Sans', sans-serif;">operation_type</div>
<div class="t" style="left:689px;top:78.5px;font-size:9.5px;line-height:9px;color:#587581;">a</div>
<div class="a" style="left:693.3px;top:77.8px;width:5.5px;height:10px;background:#587581;"></div>
<div class="t" style="left:693.6px;top:78.5px;font-size:9.5px;line-height:9px;color:#E5DFD0;">b</div>
<div class="t" style="left:698.8px;top:78.5px;font-size:9.5px;line-height:9px;color:#587581;">c</div>
<div class="t" style="left:818px;top:78.5px;font-size:9.5px;line-height:9px;color:#587581;">a</div>
<div class="a" style="left:822.3px;top:77.8px;width:5.5px;height:10px;background:#587581;"></div>
<div class="t" style="left:822.6px;top:78.5px;font-size:9.5px;line-height:9px;color:#E5DFD0;">b</div>
<div class="t" style="left:827.8px;top:78.5px;font-size:9.5px;line-height:9px;color:#587581;">c</div>
<div class="t" style="left:946.5px;top:78.5px;font-size:9.5px;line-height:9px;color:#587581;">a</div>
<div class="a" style="left:950.8px;top:77.8px;width:5.5px;height:10px;background:#587581;"></div>
<div class="t" style="left:951.1px;top:78.5px;font-size:9.5px;line-height:9px;color:#E5DFD0;">b</div>
<div class="t" style="left:956.3px;top:78.5px;font-size:9.5px;line-height:9px;color:#587581;">c</div>
<div class="t" style="left:710px;top:76.535px;height:11.93px;line-height:11.93px;font-size:11.93px;color:#A5B0B0;font-weight:400;font-family:'Liberation Sans', sans-serif;">Filter...</div>
<div class="t" style="left:839px;top:76.535px;height:11.93px;line-height:11.93px;font-size:11.93px;color:#A5B0B0;font-weight:400;font-family:'Liberation Sans', sans-serif;">Filter...</div>
<div class="t" style="left:967.5px;top:76.535px;height:11.93px;line-height:11.93px;font-size:11.93px;color:#A5B0B0;font-weight:400;font-family:'Liberation Sans', sans-serif;">Filter...</div>
<div class="t" style="left:687.4px;top:168px;height:11.2px;line-height:11.2px;font-size:11.2px;color:#5B7680;font-weight:400;font-family:'Liberation Sans', sans-serif;">50</div>
<div class="t" style="left:814px;top:168px;height:11.2px;line-height:11.2px;font-size:11.2px;color:#5B7680;font-weight:400;font-family:'Liberation Sans', sans-serif;">0.000</div>
<div class="t" style="left:944px;top:168px;height:11.2px;line-height:11.2px;font-size:11.2px;color:#5B7680;font-weight:400;font-family:'Liberation Sans', sans-serif;">10</div>
<div class="t" style="left:687.4px;top:191px;height:11.2px;line-height:11.2px;font-size:11.2px;color:#5B7680;font-weight:400;font-family:'Liberation Sans', sans-serif;">51</div>
<div class="t" style="left:814px;top:191px;height:11.2px;line-height:11.2px;font-size:11.2px;color:#5B7680;font-weight:400;font-family:'Liberation Sans', sans-serif;">0.000</div>
<div class="t" style="left:944px;top:191px;height:11.2px;line-height:11.2px;font-size:11.2px;color:#5B7680;font-weight:400;font-family:'Liberation Sans', sans-serif;">10</div>
<div class="t" style="left:687.4px;top:213px;height:11.2px;line-height:11.2px;font-size:11.2px;color:#5B7680;font-weight:400;font-family:'Liberation Sans', sans-serif;">52</div>
<div class="t" style="left:814px;top:213px;height:11.2px;line-height:11.2px;font-size:11.2px;color:#5B7680;font-weight:400;font-family:'Liberation Sans', sans-serif;">0.000</div>
<div class="t" style="left:944px;top:213px;height:11.2px;line-height:11.2px;font-size:11.2px;color:#5B7680;font-weight:400;font-family:'Liberation Sans', sans-serif;">10</div>
<div class="t" style="left:687.4px;top:236px;height:11.2px;line-height:11.2px;font-size:11.2px;color:#5B7680;font-weight:400;font-family:'Liberation Sans', sans-serif;">53</div>
<div class="t" style="left:814px;top:236px;height:11.2px;line-height:11.2px;font-size:11.2px;color:#5B7680;font-weight:400;font-family:'Liberation Sans', sans-serif;">0.000</div>
<div class="t" style="left:944px;top:236px;height:11.2px;line-height:11.2px;font-size:11.2px;color:#5B7680;font-weight:400;font-family:'Liberation Sans', sans-serif;">10</div>
<div class="t" style="left:687.4px;top:259px;height:11.2px;line-height:11.2px;font-size:11.2px;color:#5B7680;font-weight:400;font-family:'Liberation Sans', sans-serif;">54</div>
<div class="t" style="left:814px;top:259px;height:11.2px;line-height:11.2px;font-size:11.2px;color:#5B7680;font-weight:400;font-family:'Liberation Sans', sans-serif;">0.000</div>
<div class="t" style="left:944px;top:259px;height:11.2px;line-height:11.2px;font-size:11.2px;color:#5B7680;font-weight:400;font-family:'Liberation Sans', sans-serif;">10</div>
<div class="a" style="left:683px;top:269.4px;width:72px;height:8.5px;background:#C3C0B3;"></div>
<div class="a" style="left:687px;top:279.6px;width:68px;height:24.2px;background:#AC9D57;"></div>
<div class="t" style="left:693.7px;top:287px;height:11.17px;line-height:11.17px;font-size:11.17px;color:#FFFFFF;font-weight:400;font-family:'Liberation Sans', sans-serif;-webkit-text-stroke:0.3px #fff">CONSOLE</div>
<div class="a" style="left:687px;top:303.7px;width:55px;height:24.9px;background:#AC9D57;"></div>
<div class="t" style="left:699px;top:311px;height:11.17px;line-height:11.17px;font-size:11.17px;color:#FFFFFF;font-weight:400;font-family:'Liberation Sans', sans-serif;-webkit-text-stroke:0.3px #fff">OPEN</div>
<div class="a" style="left:766px;top:279.6px;width:99.5px;height:24.2px;background:#AC9D57;"></div>
<div class="t" style="left:772px;top:287px;height:11.17px;line-height:11.17px;font-size:11.17px;color:#FFFFFF;font-weight:400;font-family:'Liberation Sans', sans-serif;-webkit-text-stroke:0.3px #fff">RE-RUN QUERY</div>
<div class="a" style="left:876.7px;top:279.6px;width:58.3px;height:24.2px;background:#AC9D57;"></div>
<div class="t" style="left:882.5px;top:287px;height:11.17px;line-height:11.17px;font-size:11.17px;color:#FFFFFF;font-weight:400;font-family:'Liberation Sans', sans-serif;-webkit-text-stroke:0.3px #fff">EXPORT</div>
<div class="t" style="left:963px;top:290px;height:8.91px;line-height:8.91px;font-size:8.91px;color:#5B7680;font-weight:400;font-family:'Liberation Sans', sans-serif;">1-50 of 57278</div>
<svg style="left:1039.5px;top:287.5px" width="7" height="10" viewBox="0 0 7 10"><path d="M6 1 L1.5 5 L6 9" fill="none" stroke="#B8B8B8" stroke-width="1.1"/></svg>
<svg style="left:978.5px;top:311px" width="7" height="10" viewBox="0 0 7 10"><path d="M1 1 L5 4.8 L1 8.6" fill="none" stroke="#5B7680" stroke-width="1.2"/></svg>
<div class="a" style="left:308.3px;top:88.9px;width:284.7px;height:62.8px;background:#EEE8D5;border:1px solid #D8D5CA"></div>
<div class="t" style="left:314px;top:97.3px;height:14.6px;line-height:14.6px;font-size:14.6px;color:#93A1A1;font-weight:400;font-family:'Liberation Mono', monospace;letter-spacing:-0.76px;-webkit-text-stroke:0.25px">WHEN</div>
<div class="t" style="left:314px;top:130px;font-family:'Liberation Mono', monospace;font-size:14.6px;line-height:17px;letter-spacing:-0.76px;-webkit-text-stroke:0.25px;color:#93A1A1"><span style="color:#268BD2">WORD</span>: <span style="color:#2AA198">WHEN</span></div>
<svg style="left:576px;top:96px" width="8" height="8" viewBox="0 0 8 8"><path d="M0.7 0.7 L7.3 7.3 M7.3 0.7 L0.7 7.3" stroke="#777" stroke-width="1"/></svg>
<div class="a" style="left:592.4px;top:88.9px;width:370px;height:85px;background:#EEE8D5;border:1px solid #D8D5CA"></div>
<div class="a" style="left:593.4px;top:89.9px;width:368px;height:19.8px;background:#E8DDB5;"></div>
<svg style="left:595.5px;top:92.8px" width="14" height="14" viewBox="0 0 14 14"><path d="M11 2.2 a3.2 3.2 0 0 0 -4.3 4.1 L1.6 11.4 a1 1 0 0 0 1.4 1.4 L8.1 7.7 a3.2 3.2 0 0 0 4.1 -4.3 L10.5 5.1 L9 4.8 L8.7 3.3 Z" fill="none" stroke="#666" stroke-width="1"/></svg>
<div class="t" style="left:612px;top:91.8px;font-family:'Liberation Mono', monospace;font-size:14.6px;line-height:17px;letter-spacing:-0.76px;-webkit-text-stroke:0.25px;color:#555F60"><span style="color:#B58900;font-weight:700">WH</span>EN</div>
<svg style="left:595.5px;top:113.4px" width="14" height="14" viewBox="0 0 14 14"><path d="M11 2.2 a3.2 3.2 0 0 0 -4.3 4.1 L1.6 11.4 a1 1 0 0 0 1.4 1.4 L8.1 7.7 a3.2 3.2 0 0 0 4.1 -4.3 L10.5 5.1 L9 4.8 L8.7 3.3 Z" fill="none" stroke="#666" stroke-width="1"/></svg>
<div class="t" style="left:612px;top:112.4px;font-family:'Liberation Mono', monospace;font-size:14.6px;line-height:17px;letter-spacing:-0.76px;-webkit-text-stroke:0.25px;color:#657B83"><span style="color:#B58900;font-weight:700">WH</span>ERE</div>
<svg style="left:595.5px;top:134.0px" width="14" height="14" viewBox="0 0 14 14"><path d="M11 2.2 a3.2 3.2 0 0 0 -4.3 4.1 L1.6 11.4 a1 1 0 0 0 1.4 1.4 L8.1 7.7 a3.2 3.2 0 0 0 4.1 -4.3 L10.5 5.1 L9 4.8 L8.7 3.3 Z" fill="none" stroke="#666" stroke-width="1"/></svg>
<div class="t" style="left:612px;top:133.0px;font-family:'Liberation Mono', monospace;font-size:14.6px;line-height:17px;letter-spacing:-0.76px;-webkit-text-stroke:0.25px;color:#657B83"><span style="color:#B58900;font-weight:700">WH</span>ILE</div>
<svg style="left:595.5px;top:154.6px" width="14" height="14" viewBox="0 0 14 14"><path d="M11 2.2 a3.2 3.2 0 0 0 -4.3 4.1 L1.6 11.4 a1 1 0 0 0 1.4 1.4 L8.1 7.7 a3.2 3.2 0 0 0 4.1 -4.3 L10.5 5.1 L9 4.8 L8.7 3.3 Z" fill="none" stroke="#666" stroke-width="1"/></svg>
<div class="t" style="left:612px;top:153.6px;font-family:'Liberation Mono', monospace;font-size:14.6px;line-height:17px;letter-spacing:-0.76px;-webkit-text-stroke:0.25px;color:#657B83"><span style="color:#B58900;font-weight:700">W</span>EIG<span style="color:#B58900;font-weight:700">H</span>T_STRING</div>
<div class="a" style="left:285px;top:330px;width:795px;height:325px;background:#FDF6E3;"></div>
<div class="a" style="left:285px;top:330px;width:795px;height:1.8px;background:#EDE7D4;"></div>
<div class="t" style="left:301.7px;top:343px;height:9.25px;line-height:9.25px;font-size:9.25px;color:#6B6B6B;font-weight:400;font-family:'Liberation Sans', sans-serif;">PROBLEMS</div>
<div class="t" style="left:373.3px;top:343px;height:9.25px;line-height:9.25px;font-size:9.25px;color:#6B6B6B;font-weight:400;font-family:'Liberation Sans', sans-serif;">OUTPUT</div>
<div class="t" style="left:433.6px;top:343px;height:9.25px;line-height:9.25px;font-size:9.25px;color:#6B6B6B;font-weight:400;font-family:'Liberation Sans', sans-serif;">DEBUG CONSOLE</div>
<div class="t" style="left:535.8px;top:343px;height:9.25px;line-height:9.25px;font-size:9.25px;color:#6B6B6B;font-weight:400;font-family:'Liberation Sans', sans-serif;">TERMINAL</div>
<div class="t" style="left:604px;top:343px;height:9.25px;line-height:9.25px;font-size:9.25px;color:#6B6B6B;font-weight:400;font-family:'Liberation Sans', sans-serif;">GITLENS: VISUAL FILE HISTORY</div>
<div class="t" style="left:768.9px;top:343px;height:9.25px;line-height:9.25px;font-size:9.25px;color:#424242;font-weight:400;font-family:'Liberation Sans', sans-serif;">SQL CONSOLE: MESSAGES</div>
<div class="a" style="left:767px;top:355px;width:127.6px;height:1.3px;background:#9E9A8E;"></div>
<div class="t" style="left:312.8px;top:364px;height:12.3px;line-height:12.3px;font-size:12.3px;color:#5E5E5E;font-weight:400;font-family:'Liberation Sans', sans-serif;letter-spacing:-0.221px">Not focused to results view</div>
<svg style="left:1017px;top:341px" width="11" height="11" viewBox="0 0 11 11"><rect x="0.6" y="3.3" width="7.2" height="7.2" rx="1.2" fill="none" stroke="#CFCABC" stroke-width="1"/><path d="M3.3 3.3 V1.8 Q3.3 0.6 4.5 0.6 H9.2 Q10.4 0.6 10.4 1.8 V6.5 Q10.4 7.8 9.2 7.8 H7.8 M2.5 6.8 H6" fill="none" stroke="#CFCABC" stroke-width="1"/></svg>
<svg style="left:1040px;top:341.8px" width="11" height="7" viewBox="0 0 11 7"><path d="M1 6 L5 2 L9 6" fill="none" stroke="#555" stroke-width="1.05"/></svg>
<svg style="left:1059.5px;top:341.5px" width="9" height="9" viewBox="0 0 9 9"><path d="M0.7 0.7 L8 8 M8 0.7 L0.7 8" stroke="#555" stroke-width="1.05"/></svg>
<div class="a" style="left:0px;top:654.6px;width:1080px;height:19.4px;background:#EEE8D5;"></div>
<div class="a" style="left:0px;top:654.6px;width:29px;height:19.4px;background:#AC9D57;"></div>
<svg style="left:0px;top:654px" width="29" height="20" viewBox="0 0 29 20"><path d="M11.3 662.2 L14.1 665 L11.3 668.1 M17.5 659 L15.2 661.8 L17.5 664.5" transform="translate(0,-654)" fill="none" stroke="#EDE6C8" stroke-width="1.2" stroke-linecap="round" stroke-linejoin="round"/></svg>
<svg style="left:37.5px;top:658.5px" width="9" height="12" viewBox="0 0 9 12"><circle cx="2" cy="2" r="1.5" fill="none" stroke="#5B6B70"/><circle cx="2" cy="10" r="1.5" fill="none" stroke="#5B6B70"/><circle cx="7" cy="4" r="1.5" fill="none" stroke="#5B6B70"/><path d="M2 3.5 V8.5 M7 5.5 C7 7.5 2 7 2 8.5" fill="none" stroke="#5B6B70"/></svg>
<div class="t" style="left:51px;top:659px;height:10.7px;line-height:10.7px;font-size:10.7px;color:#5B6B70;font-weight:400;font-family:'Liberation Sans', sans-serif;">main*</div>
<svg style="left:0px;top:0px" width="1080" height="674" viewBox="0 0 1080 674"><path d="M93.9 663.5 A4.7 4.7 0 0 1 103.3 663.5 M103.3 663.5 A4.7 4.7 0 0 1 93.9 663.5" fill="none" stroke="#5B6B70" stroke-width="1.1"/><path d="M101.6 662.3 L103.3 664.2 L105 662.3 M92.2 664.7 L93.9 662.8 L95.6 664.7" fill="none" stroke="#5B6B70" stroke-width="1.1"/></svg>
<div class="t" style="left:118.5px;top:659px;height:10.7px;line-height:10.7px;font-size:10.7px;color:#5B6B70;font-weight:400;font-family:'Liberation Sans', sans-serif;letter-spacing:-0.55px">Go 1.18</div>
<svg style="left:156px;top:658px" width="9" height="12" viewBox="0 0 9 12"><path d="M6 0.5 L2 6.5 H6 L3 11.5 M6 0.5 L8 0.5" fill="none" stroke="#5B6B70" stroke-width="1"/></svg>
<svg style="left:180px;top:659px" width="11" height="11" viewBox="0 0 11 11"><circle cx="5.5" cy="5.5" r="4.8" fill="none" stroke="#5B6B70" stroke-width="1"/><path d="M3.5 3.5 L7.5 7.5 M7.5 3.5 L3.5 7.5" stroke="#5B6B70" stroke-width="1"/></svg>
<div class="t" style="left:195px;top:659px;height:10.7px;line-height:10.7px;font-size:10.7px;color:#5B6B70;font-weight:400;font-family:'Liberation Sans', sans-serif;">0</div>
<svg style="left:204px;top:658.5px" width="11" height="11" viewBox="0 0 11 11"><path d="M5.5 0.8 L10.5 10 H0.5 Z" fill="none" stroke="#5B6B70" stroke-width="1"/><path d="M5.5 4 V7 M5.5 8 V9" stroke="#5B6B70" stroke-width="1"/></svg>
<div class="t" style="left:218.5px;top:659px;height:10.7px;line-height:10.7px;font-size:10.7px;color:#5B6B70;font-weight:400;font-family:'Liberation Sans', sans-serif;">0</div>
<svg style="left:241.5px;top:658.5px" width="7" height="11" viewBox="0 0 7 11"><ellipse cx="3.5" cy="2" rx="3" ry="1.4" fill="none" stroke="#5B6B70" stroke-width="0.9"/><path d="M0.5 2 V9 C0.5 10.8 6.5 10.8 6.5 9 V2" fill="none" stroke="#5B6B70" stroke-width="0.9"/></svg>
<div class="t" style="left:253.5px;top:659px;height:10.7px;line-height:10.7px;font-size:10.7px;color:#5B6B70;font-weight:400;font-family:'Liberation Sans', sans-serif;">hyycloud-db</div>
<div class="t" style="left:550px;top:659px;height:10.7px;line-height:10.7px;font-size:10.7px;color:#5B6B70;font-weight:400;font-family:'Liberation Sans', sans-serif;">Ln 1, Col 31</div>
<div class="t" style="left:620px;top:659px;height:10.7px;line-height:10.7px;font-size:10.7px;color:#5B6B70;font-weight:400;font-family:'Liberation Sans', sans-serif;">Spaces: 4</div>
<div class="t" style="left:681.5px;top:659px;height:10.7px;line-height:10.7px;font-size:10.7px;color:#5B6B70;font-weight:400;font-family:'Liberation Sans', sans-serif;">UTF-8</div>
<div class="t" style="left:726.5px;top:659px;height:10.7px;line-height:10.7px;font-size:10.7px;color:#5B6B70;font-weight:400;font-family:'Liberation Sans', sans-serif;">LF</div>
<div class="t" style="left:752px;top:659px;height:10.7px;line-height:10.7px;font-size:10.7px;color:#5B6B70;font-weight:400;font-family:'Liberation Sans', sans-serif;">SQL</div>
<svg style="left:786.5px;top:658.5px" width="12" height="11" viewBox="0 0 12 11"><path d="M6 0.8 L11.2 10 H0.8 Z" fill="none" stroke="#5B6B70" stroke-width="1"/><path d="M6 4 V7 M6 8 V9" stroke="#5B6B70" stroke-width="1"/></svg>
<div class="t" style="left:801px;top:659px;height:10.7px;line-height:10.7px;font-size:10.7px;color:#5B6B70;font-weight:400;font-family:'Liberation Sans', sans-serif;">Go Update Available</div>
<svg style="left:913px;top:658.5px" width="11" height="11" viewBox="0 0 11 11"><circle cx="5.5" cy="5.5" r="2" fill="none" stroke="#5B6B70"/><circle cx="5.5" cy="5.5" r="4" fill="none" stroke="#5B6B70" stroke-width="1.6" stroke-dasharray="1.2 0.9"/></svg>
<div class="t" style="left:928px;top:659px;height:10.7px;line-height:10.7px;font-size:10.7px;color:#5B6B70;font-weight:400;font-family:'Liberation Sans', sans-serif;">Spell</div>
<svg style="left:965px;top:658.5px" width="13" height="11" viewBox="0 0 13 11"><path d="M2 5 C2 1.5 4 1 6.5 1 C9 1 11 1.5 11 5 L12 6.5 V8.5 C10 10 8.5 10.5 6.5 10.5 C4.5 10.5 3 10 1 8.5 V6.5 Z" fill="none" stroke="#5B6B70" stroke-width="1"/><ellipse cx="4.5" cy="4.3" rx="1.6" ry="1.3" fill="#5B6B70"/><ellipse cx="8.5" cy="4.3" rx="1.6" ry="1.3" fill="#5B6B70"/></svg>
<svg style="left:990.5px;top:659.5px" width="12" height="9" viewBox="0 0 12 9"><path d="M0.5 5 L3 8 L8 1 M5 7 L6 8 L11 1" fill="none" stroke="#5B6B70" stroke-width="1"/></svg>
<div class="t" style="left:1005px;top:659px;height:10.7px;line-height:10.7px;font-size:10.7px;color:#5B6B70;font-weight:400;font-family:'Liberation Sans', sans-serif;">Prettier</div>
<svg style="left:1055px;top:658px" width="12" height="12" viewBox="0 0 12 12"><path d="M2 9 H10 L9 7.5 V5 A3 3 0 0 0 3 5 V7.5 Z M5 10.5 H7" fill="none" stroke="#5B6B70" stroke-width="1"/><circle cx="9.5" cy="2.5" r="1.8" fill="#5B6B70"/></svg>
<div class="a" style="left:0px;top:672.9px;width:1080px;height:1.1px;background:#F1EBD8;"></div>
<div class="a" style="left:0px;top:0px;width:7px;height:7px;overflow:hidden;background:#9B3A9B"><div style="width:7px;height:7px;border-top-left-radius:7px;background:#EEE8D5"></div></div>
<div class="a" style="left:1073px;top:0px;width:7px;height:7px;overflow:hidden;background:#A95A8A"><div style="width:7px;height:7px;border-top-right-radius:7px;background:#EEE8D5"></div></div>
<div class="a" style="left:0px;top:667px;width:7px;height:7px;overflow:hidden;background:#1A0A50"><div style="width:7px;height:7px;border-bottom-left-radius:7px;background:#AC9D57"></div></div>
<div class="a" style="left:1073px;top:667px;width:7px;height:7px;overflow:hidden;background:#2A1070"><div style="width:7px;height:7px;border-bottom-right-radius:7px;background:#EEE8D5"></div></div>
</body></html>
